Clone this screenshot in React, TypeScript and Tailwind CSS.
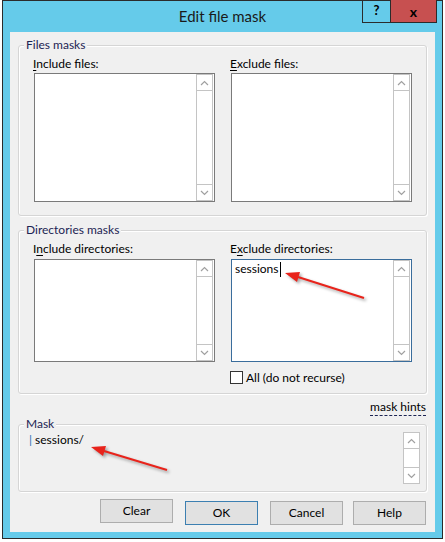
import type { ReactNode } from "react";

const ui = "font-['Lato','Noto_Sans',sans-serif]";

function Chevron({ up }: { up?: boolean }) {
  return (
    <svg width="9" height="6" viewBox="0 0 9 6" className="block">
      <path
        d={up ? "M1 5 L4.5 1.5 L8 5" : "M1 1 L4.5 4.5 L8 1"}
        fill="none"
        stroke="#a0a0a0"
        strokeWidth="1.2"
      />
    </svg>
  );
}

function ScrollBar() {
  return (
    <div className="flex h-full w-[17px] flex-col border border-[#c4c4c4] bg-white">
      <div className="flex h-[16px] items-center justify-center border-b border-[#c4c4c4]">
        <Chevron up />
      </div>
      <div className="flex-1" />
      <div className="flex h-[16px] items-center justify-center border-t border-[#c4c4c4]">
        <Chevron />
      </div>
    </div>
  );
}

function ListBox({
  h,
  focused,
  children,
}: {
  h: string;
  focused?: boolean;
  children?: ReactNode;
}) {
  return (
    <div
      className={`flex w-[181px] ${h} border bg-white pr-[1px] ${
        focused ? "border-[#3a6d9c]" : "border-[#7a7a7a]"
      }`}
    >
      <div className="flex-1 pl-[3px] pt-[1px]">{children}</div>
      <ScrollBar />
    </div>
  );
}

// group box: caption sits on the top border
function Group({
  label,
  className,
  children,
}: {
  label: string;
  className?: string;
  children: ReactNode;
}) {
  return (
    <div
      className={`mx-[8px] rounded-[3px] border border-[#d5d5d5] shadow-[inset_1px_1px_0_#ffffff,1px_1px_0_#ffffff] ${className ?? ""}`}
    >
      <div className="-mt-[9px] ml-[5px] w-fit bg-[#f0f0f0] px-[2px] text-[12px] leading-[16px] text-[#1c2453]">
        {label}
      </div>
      {children}
    </div>
  );
}

function Label({ pre, u, post }: { pre: string; u: string; post: string }) {
  return (
    <div className="-ml-[1px] text-[12px] leading-[16px] text-black">
      {pre}
      <span className="underline underline-offset-2">{u}</span>
      {post}
    </div>
  );
}

function Button({ children, focused }: { children: ReactNode; focused?: boolean }) {
  return (
    <button
      className={`h-[24px] w-[73px] border bg-[#e1e1e1] text-[12px] text-black ${
        focused ? "border-[#3c7fb1]" : "border-[#adadad]"
      }`}
    >
      {children}
    </button>
  );
}

export default function App() {
  return (
    <div className={`relative h-[542px] w-[445px] overflow-hidden bg-white ${ui}`}>
      <div className="ml-[2px] flex h-[539px] w-[441px] flex-col border border-[#2b2b2b] bg-[#65cbea]">
        {/* title bar */}
        <div className="relative flex h-[31px] items-center justify-center">
          <span className="text-[15px] text-[#1a1a1a]">Edit file mask</span>
          <div className="absolute right-[5px] top-[-1px] flex h-[23px] border-x border-b border-[#2b2b2b]">
            <div className="flex w-[27px] items-center justify-center text-[13px] font-bold text-black">
              ?
            </div>
            <div className="flex w-[46px] items-center justify-center border-l border-[#2b2b2b] bg-[#c75050] text-[14px] font-bold text-black">
              x
            </div>
          </div>
        </div>

        {/* client area */}
        <div className="mx-[7px] flex h-[500px] w-[425px] flex-col bg-[#f0f0f0]">
          <Group label="Files masks" className="mt-[13px]">
            <div className="flex gap-[16px] px-[15px] pb-[13px] pt-[3px]">
              <div>
                <Label pre="" u="I" post="nclude files:" />
                <div className="mt-[1px]">
                  <ListBox h="h-[129px]" />
                </div>
              </div>
              <div>
                <Label pre="" u="E" post="xclude files:" />
                <div className="mt-[1px]">
                  <ListBox h="h-[129px]" />
                </div>
              </div>
            </div>
          </Group>

          <Group label="Directories masks" className="mt-[14px]">
            <div className="flex items-start gap-[16px] px-[15px] pb-[9px] pt-[3px]">
              <div>
                <Label pre="I" u="n" post="clude directories:" />
                <div className="mt-[2px]">
                  <ListBox h="h-[103px]" />
                </div>
              </div>
              <div>
                <Label pre="E" u="x" post="clude directories:" />
                <div className="mt-[2px]">
                  <ListBox h="h-[103px]" focused>
                    <div className="flex items-center text-[12px] leading-[16px] text-black">
                      sessions
                      <span className="ml-[1px] inline-block h-[15px] w-[1px] bg-black" />
                    </div>
                  </ListBox>
                </div>
                <div className="-ml-[1px] mt-[9px] flex items-center gap-[3px]">
                  <div className="h-[13px] w-[13px] border border-[#333333] bg-white" />
                  <span className="text-[12px] leading-[13px] text-black">All (do not recurse)</span>
                </div>
              </div>
            </div>
          </Group>

          <div className="mr-[9px] mt-[6px] flex h-[16px] justify-end">
            <span className="border-b border-dashed border-[#1c2453] text-[12px] leading-[14px] text-black">
              mask hints
            </span>
          </div>

          <Group label="Mask" className="mt-[8px]">
            <div className="flex pb-[7px] pl-[10px] pr-[6px] pt-0">
              <div className="flex-1 text-[12px] leading-[16px] text-black">
                <span className="text-[#2e6fb5]">|</span> sessions/
              </div>
              <div className="h-[52px]">
                <ScrollBar />
              </div>
            </div>
          </Group>

          <div className="mr-[9px] mt-[7px] flex justify-end">
            <Button>Clear</Button>
            <div className="ml-[12px]">
              <Button focused>OK</Button>
            </div>
            <div className="ml-[12px]">
              <Button>Cancel</Button>
            </div>
            <div className="ml-[10px]">
              <Button>Help</Button>
            </div>
          </div>
        </div>
      </div>

      {/* annotation arrows */}
      <svg
        className="pointer-events-none absolute inset-0 drop-shadow-[2px_2px_1.5px_rgba(0,0,0,0.35)]"
        width="445"
        height="542"
      >
        <line x1="364" y1="298" x2="298" y2="277" stroke="#e8231b" strokeWidth="2" />
        <polygon points="285,273 300,272 297,282" fill="#e8231b" />
        <line x1="167" y1="470" x2="104" y2="451" stroke="#e8231b" strokeWidth="2" />
        <polygon points="91,447 106,446 103,456" fill="#e8231b" />
      </svg>
    </div>
  );
}
